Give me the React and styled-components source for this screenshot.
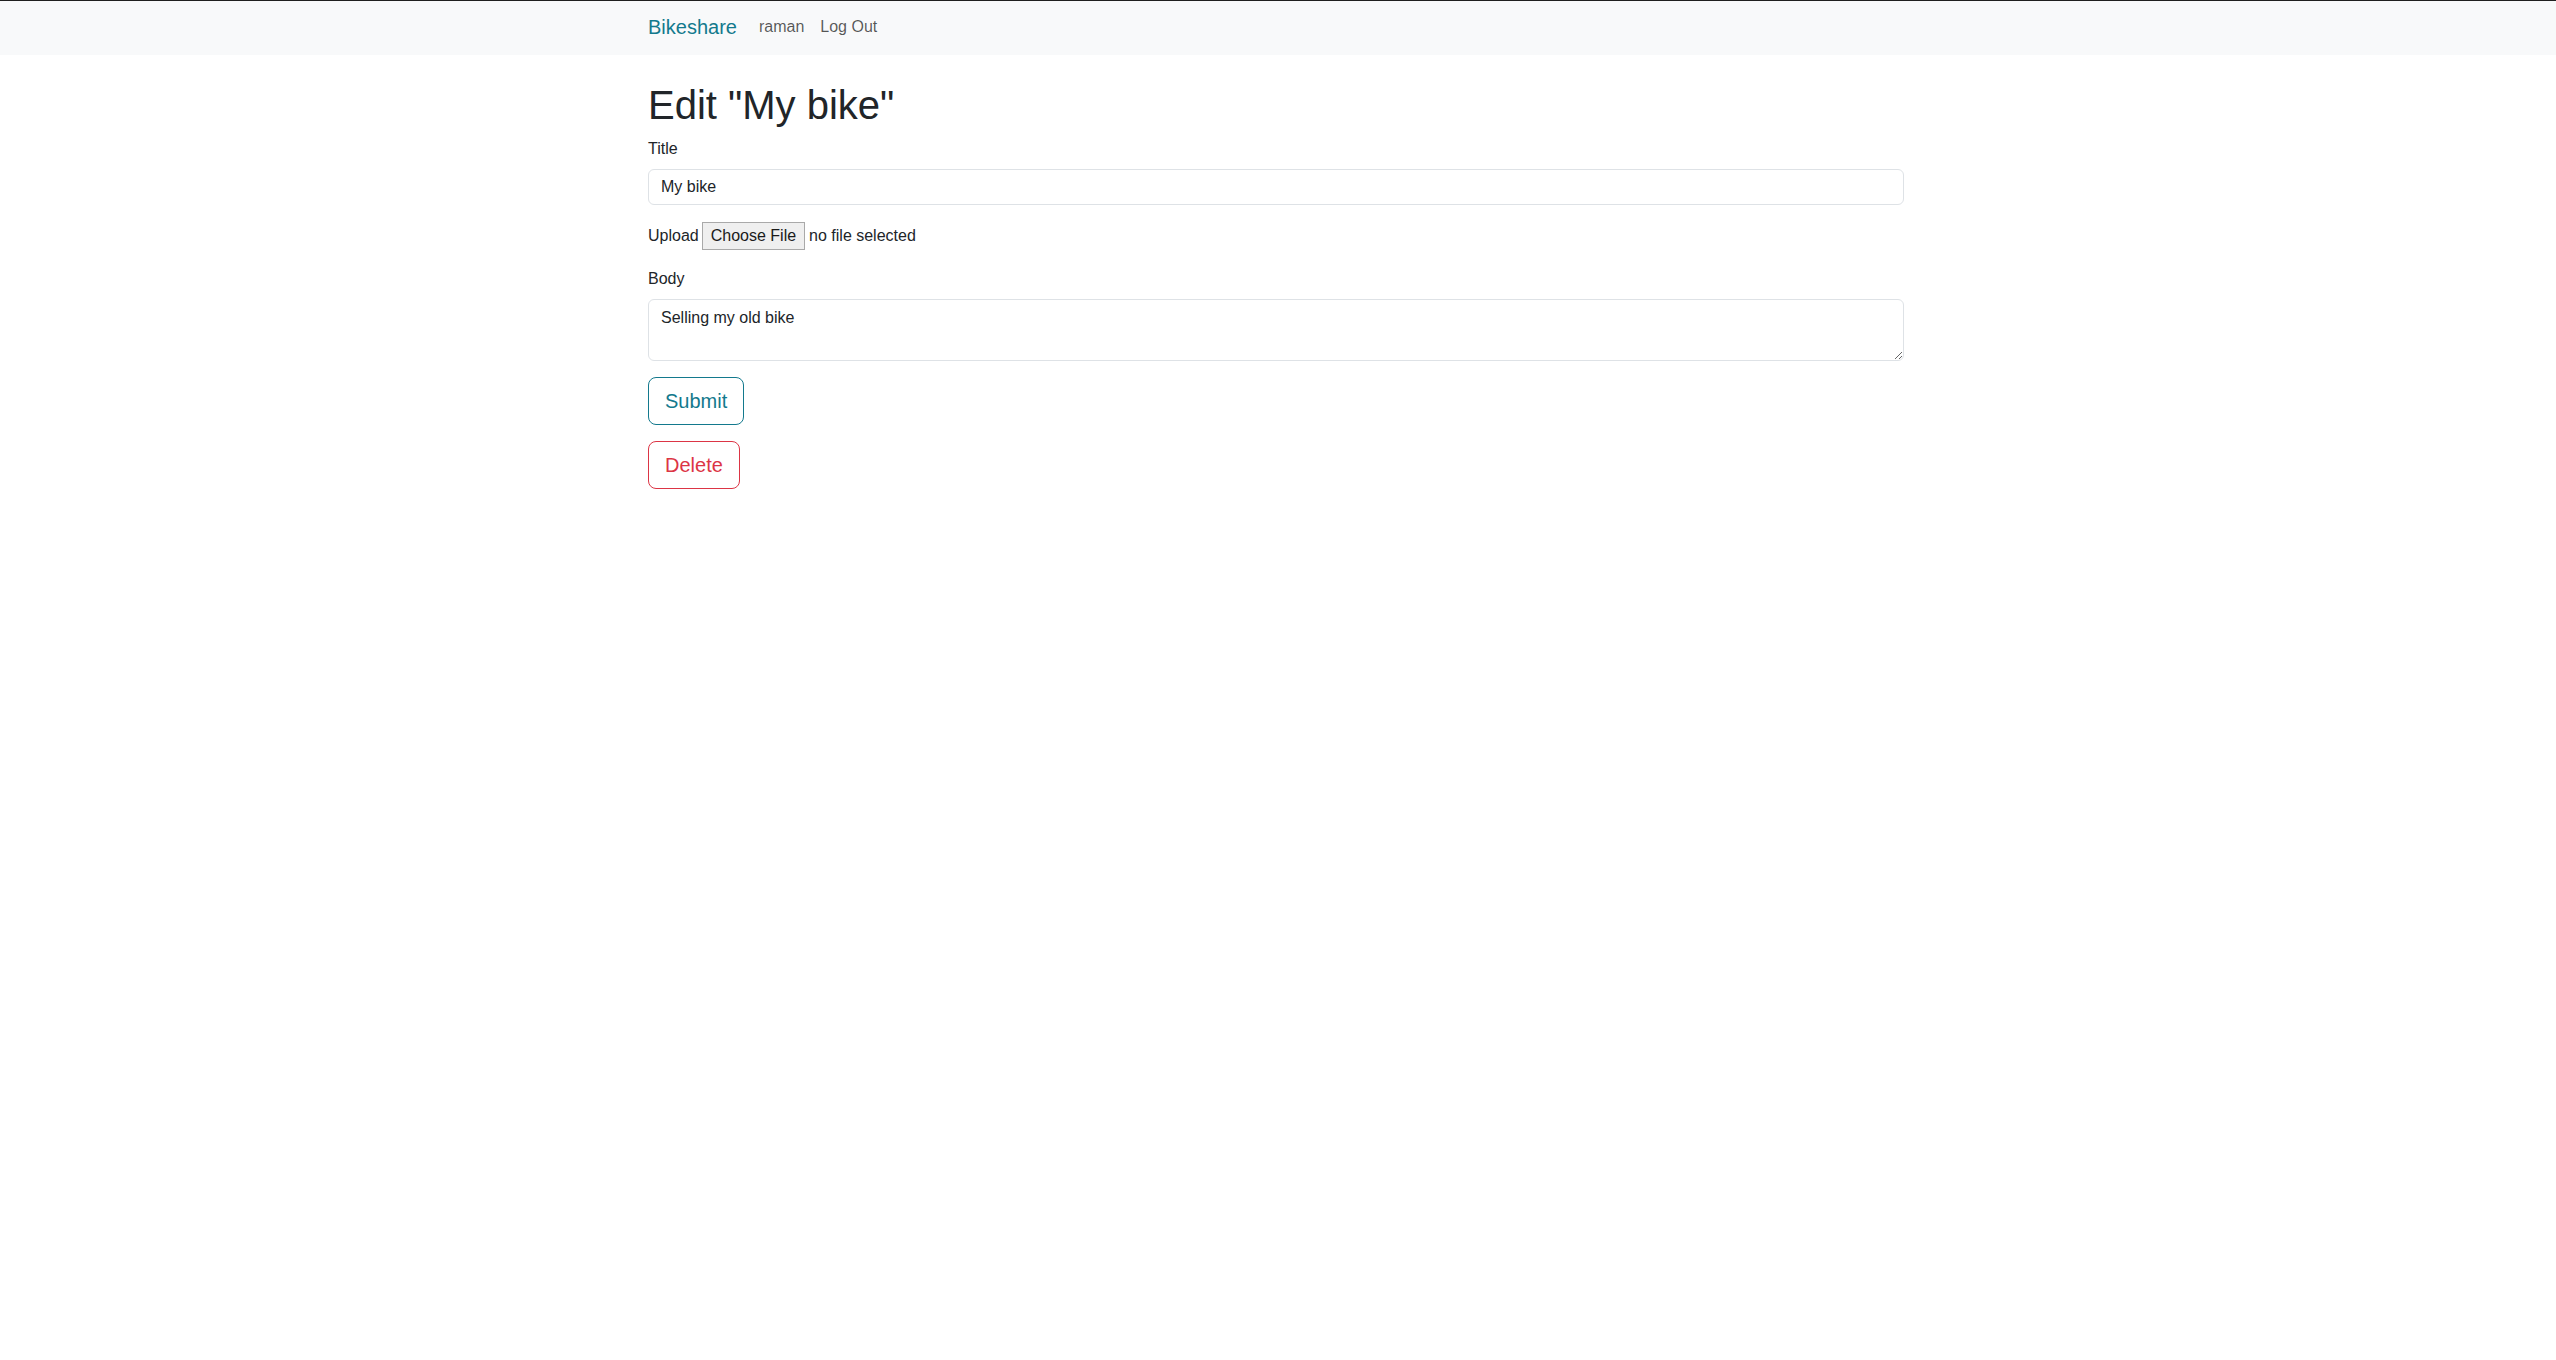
import React from "react";
import styled, { createGlobalStyle } from "styled-components";

const GlobalStyle = createGlobalStyle`
	* {
		box-sizing: border-box;
	}

	body {
		margin: 0;
		background: #fff;
		color: #212529;
		font-family: "Liberation Sans", Arial, sans-serif;
		font-size: 16px;
		line-height: 1.5;
	}
`;

const teal = "#13798d";
const red = "#dc3545";

const Container = styled.div`
	max-width: 1280px;
	margin: 0 auto;
	padding: 0 14px 0 10px;
`;

const Navbar = styled.nav`
	background: #f8f9fa;
	border-top: 1px solid #1f1f1f;
	height: 55px;

	${Container} {
		display: flex;
		align-items: center;
		height: 100%;
		padding-bottom: 2px;
	}
`;

const Brand = styled.a`
	color: ${teal};
	font-size: 20px;
	line-height: 30px;
	text-decoration: none;
	margin-right: 14px;
`;

const NavLinks = styled.ul`
	display: flex;
	list-style: none;
	margin: 0;
	padding: 0;
`;

const NavLink = styled.a`
	display: block;
	padding: 8px 8px;
	color: rgba(0, 0, 0, 0.66);
	text-decoration: none;
	line-height: 24px;
`;

const Main = styled(Container)`
	padding-top: 26px;
`;

const Heading = styled.h1`
	margin: 0 0 8px;
	font-size: 40px;
	font-weight: 500;
	line-height: 1.2;
	color: #212529;
`;

const Field = styled.div`
	margin-bottom: 16px;
`;

const Label = styled.label`
	display: block;
	margin-bottom: 8px;
`;

const inputBase = `
	display: block;
	width: 100%;
	font-family: inherit;
	font-size: 16px;
	line-height: 24px;
	color: #212529;
	background: #fff;
	border: 1px solid #dee2e6;
	border-radius: 6px;
	padding: 5px 12px;
	outline: none;
`;

const TextInput = styled.input`
	${inputBase}
`;

const TextArea = styled.textarea`
	${inputBase}
	padding: 6px 12px;
	height: 62px;
	resize: vertical;
`;

const UploadRow = styled.div`
	display: flex;
	align-items: center;
	height: 30px;
	gap: 3px;
	margin-bottom: 16px;
`;

const FileButton = styled.span`
	display: inline-flex;
	align-items: center;
	height: 28px;
	padding: 0 8px;
	background: #efefef;
	border: 1px solid #a9a9a9;
	color: #1a1a1a;
	margin-right: 1px;
`;

const ActionButton = styled.button`
	display: block;
	font-family: inherit;
	font-size: 20px;
	line-height: 30px;
	padding: 8px 16px;
	margin-bottom: 16px;
	background: transparent;
	border: 1px solid ${(p) => p.$color};
	color: ${(p) => p.$color};
	border-radius: 8px;
	cursor: pointer;
`;

export default function App() {
	return (
		<>
			<GlobalStyle />
			<Navbar>
				<Container>
					<Brand href="#">Bikeshare</Brand>
					<NavLinks>
						<li>
							<NavLink href="#">raman</NavLink>
						</li>
						<li>
							<NavLink href="#">Log Out</NavLink>
						</li>
					</NavLinks>
				</Container>
			</Navbar>
			<Main>
				<Heading>Edit "My bike"</Heading>
				<form onSubmit={(e) => e.preventDefault()}>
					<Field>
						<Label htmlFor="title">Title</Label>
						<TextInput id="title" defaultValue="My bike" />
					</Field>
					<UploadRow>
						<span>Upload</span>
						<FileButton>Choose File</FileButton>
						<span>no file selected</span>
					</UploadRow>
					<Field>
						<Label htmlFor="body">Body</Label>
						<TextArea id="body" rows={2} defaultValue="Selling my old bike" />
					</Field>
					<ActionButton type="submit" $color={teal}>
						Submit
					</ActionButton>
				</form>
				<ActionButton type="button" $color={red}>
					Delete
				</ActionButton>
			</Main>
		</>
	);
}
